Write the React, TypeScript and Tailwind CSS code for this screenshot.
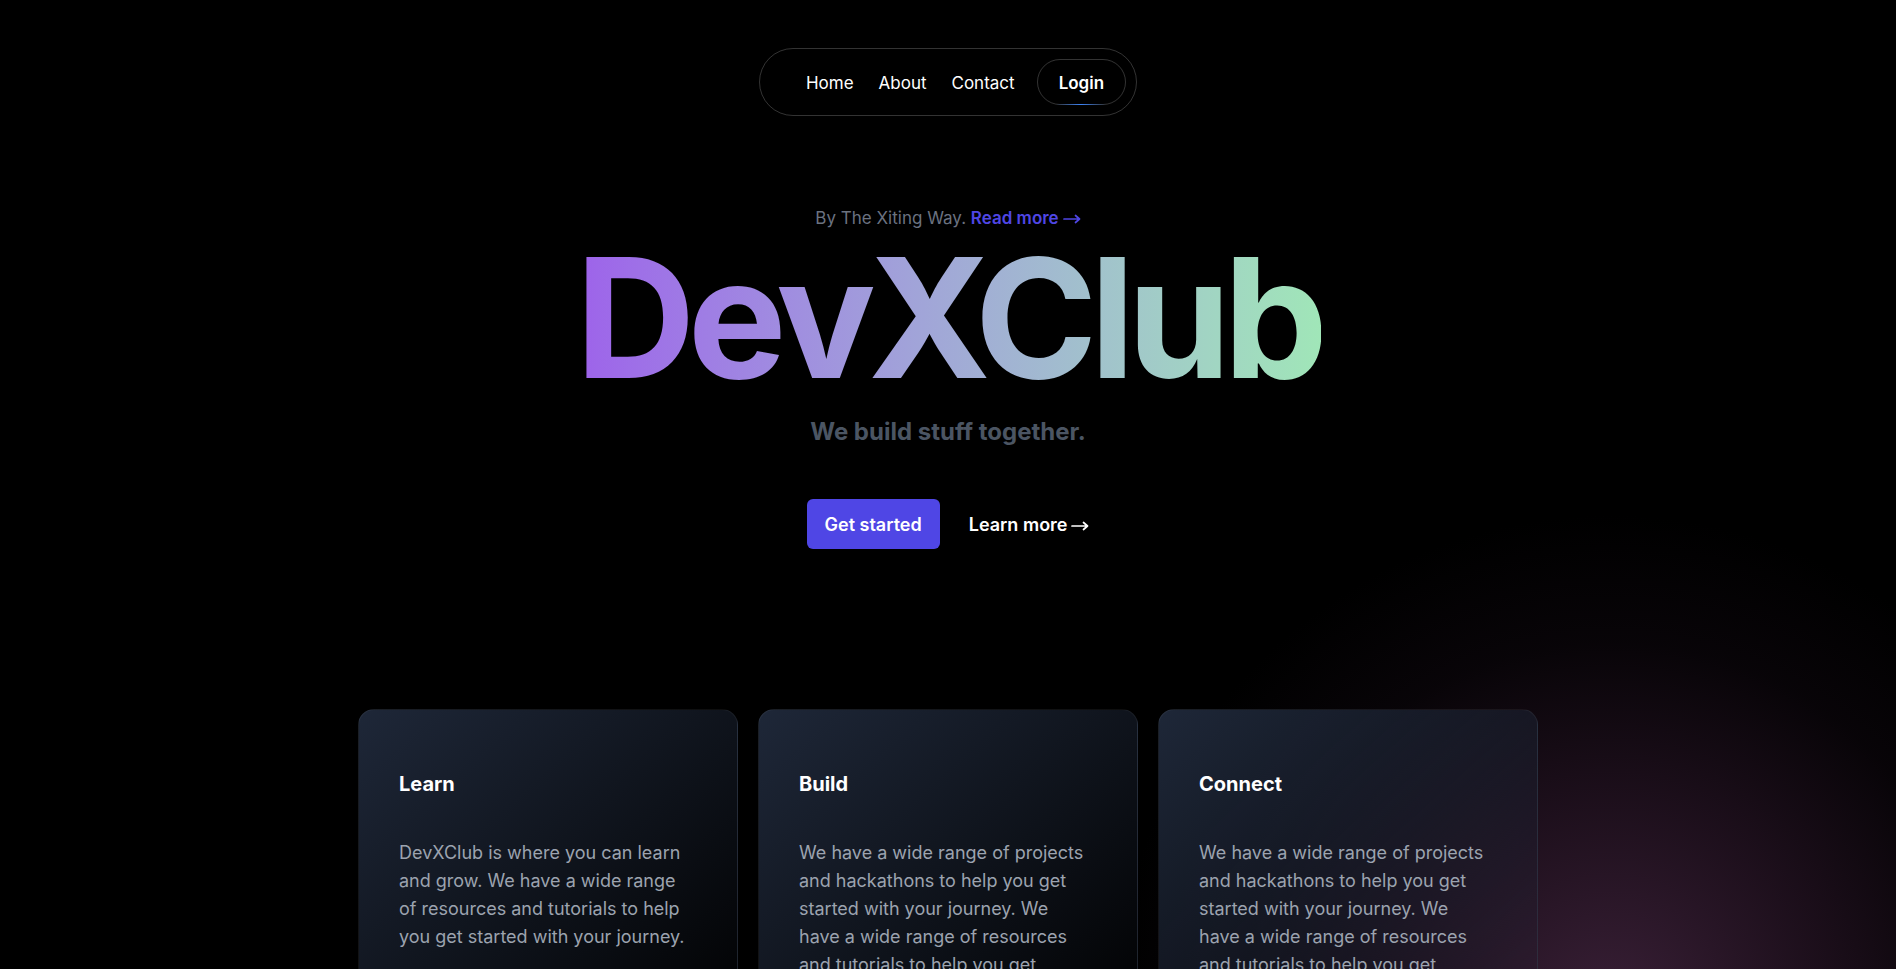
import React from "react";

const cards = [
  {
    title: "Learn",
    body: "DevXClub is where you can learn and grow. We have a wide range of resources and tutorials to help you get started with your journey.",
  },
  {
    title: "Build",
    body: "We have a wide range of projects and hackathons to help you get started with your journey. We have a wide range of resources and tutorials to help you get started with your journey.",
  },
  {
    title: "Connect",
    body: "We have a wide range of projects and hackathons to help you get started with your journey. We have a wide range of resources and tutorials to help you get started with your journey.",
  },
];

function Arrow() {
  return (
    <svg
      width="18"
      height="10"
      viewBox="0 0 18 10"
      fill="none"
      stroke="currentColor"
      strokeWidth="1.7"
      strokeLinecap="round"
      strokeLinejoin="round"
      className="ml-[4px] inline-block align-middle"
    >
      <path d="M1 5H16.5M12.5 1.5L16.5 5L12.5 8.5" />
    </svg>
  );
}

export default function App() {
  return (
    <div
      className="relative h-[969px] w-full overflow-hidden bg-black text-white"
      style={{ fontFamily: "Inter, 'Noto Sans', sans-serif" }}
    >
      <div className="pointer-events-none absolute left-[1110px] top-[510px] h-[1000px] w-[1000px] rounded-full bg-[radial-gradient(circle_at_center,rgba(60,33,57,0.95)_0%,rgba(44,23,42,0.65)_30%,rgba(24,13,24,0.32)_52%,transparent_70%)]" />

      <div className="relative">
        <nav className="flex justify-center pt-12">
          <div className="flex h-[68px] items-center rounded-full border border-white/20 pl-[46px] pr-[10px]">
            <div className="flex items-center gap-[25px] pt-[3px] text-[17px] text-white">
              <a>Home</a>
              <a>About</a>
              <a>Contact</a>
            </div>
            <button className="relative ml-[22px] flex h-[46px] items-center rounded-full border border-white/20 px-[21px] pt-[3px] text-[17px] font-semibold text-white">
              Login
              <span className="absolute bottom-[-1px] left-1/2 h-px w-[50px] -translate-x-1/2 bg-gradient-to-r from-transparent via-[#3b82f6] to-transparent" />
            </button>
          </div>
        </nav>

        <div className="mt-[88px] flex justify-center">
          <div className="text-[17px] leading-7 text-[#6b7280]">
            By The Xiting Way.{" "}
            <a className="font-semibold text-[#4f46e5]">
              Read more
              <Arrow />
            </a>
          </div>
        </div>

        <div className="mt-[3px] flex justify-center">
          <h1 className="inline-block bg-gradient-to-r from-[#9d62ea] to-[#a0e6b8] bg-clip-text text-[166px] font-bold leading-none tracking-[-0.045em] text-transparent">
            DevXClub
          </h1>
        </div>

        <p className="mt-[15px] text-center text-[24px] font-bold leading-8 text-[#4b5563]">
          We build stuff together.
        </p>

        <div className="mt-[51px] flex items-center justify-center gap-[29px]">
          <button className="h-[50px] rounded-md bg-[#4f46e5] px-[18px] text-[18px] font-semibold text-white">
            Get started
          </button>
          <a className="text-[18px] font-semibold text-white">
            Learn more
            <Arrow />
          </a>
        </div>

        <div className="mx-auto mt-[160px] grid w-[1180px] grid-cols-3 gap-5">
          {cards.map((c) => (
            <div
              key={c.title}
              className="rounded-2xl border border-white/5 bg-gradient-to-br from-[#1e2738] to-[#1e2738]/0 pb-10 pl-10 pr-[44px] pt-[60px]"
            >
              <h3 className="text-xl font-bold leading-7 text-white">{c.title}</h3>
              <p className="mt-[41px] text-lg leading-7 text-[#9ca3af]">{c.body}</p>
            </div>
          ))}
        </div>
      </div>
    </div>
  );
}
